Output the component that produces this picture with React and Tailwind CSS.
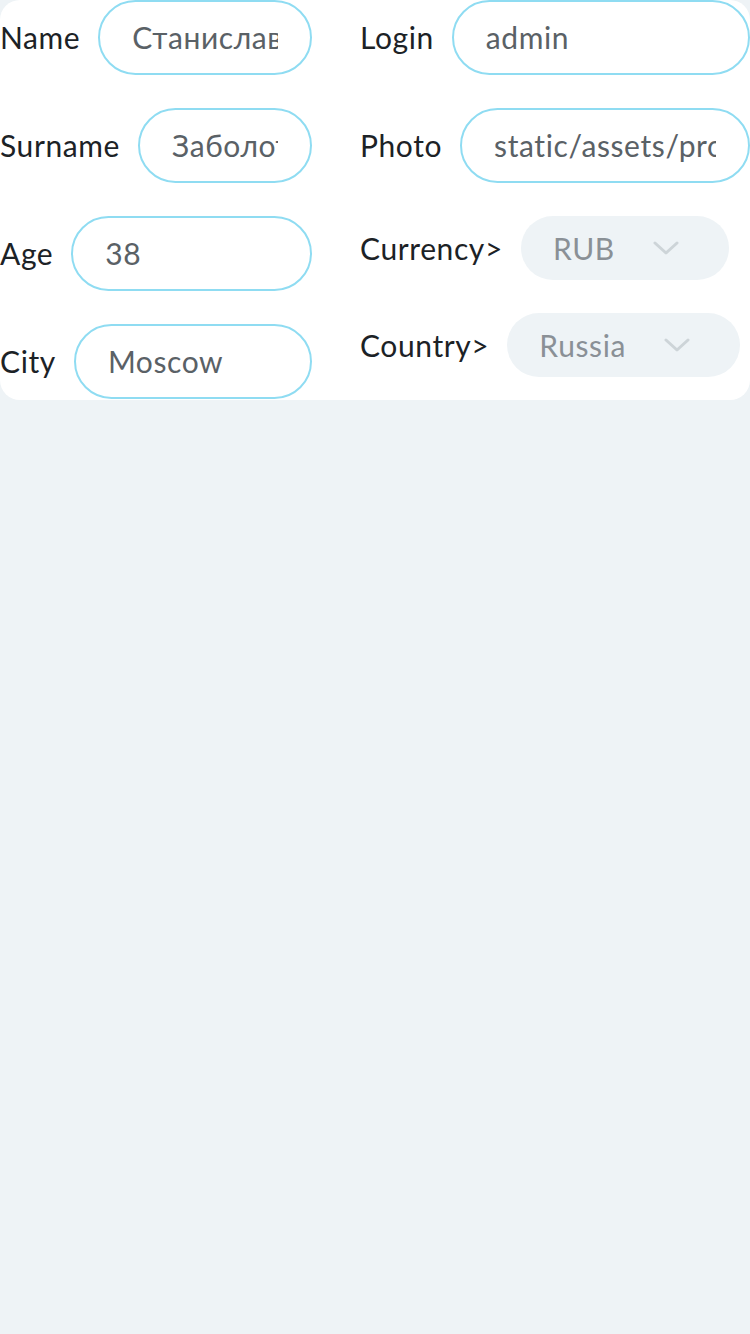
import React from 'react';

const font = { fontFamily: 'Lato, "Noto Sans", sans-serif' };

const Field = ({ label, value }) => (
  <div className="flex items-center gap-[18px] min-w-0">
    <span className="text-[30px] tracking-[0.6px] text-[#1c2226] whitespace-nowrap">{label}</span>
    <div className="flex-1 min-w-0 h-[75px] rounded-full border-2 border-[#8fdcf2] bg-white flex items-center px-[32px] overflow-hidden">
      <span className="text-[30px] tracking-[0.6px] text-[#5a6166] whitespace-nowrap overflow-hidden">{value}</span>
    </div>
  </div>
);

const Select = ({ label, value }) => (
  <div className="flex items-center gap-[18px]">
    <span className="text-[30px] tracking-[0.6px] text-[#1c2226] whitespace-nowrap">{label}</span>
    <div className="h-[64px] rounded-full bg-[#eef3f6] flex items-center pl-[32px] pr-[50px] gap-[38px]">
      <span className="text-[30px] tracking-[0.6px] text-[#8a9096] whitespace-nowrap">{value}</span>
      <svg width="26" height="14" viewBox="0 0 26 14" fill="none">
        <path d="M2 2l11 10 11-10" stroke="#cdd4d8" strokeWidth="3" strokeLinecap="round" strokeLinejoin="round" />
      </svg>
    </div>
  </div>
);

export default function App() {
  return (
    <div className="min-h-[1334px] bg-[#eef3f6]" style={font}>
      <div className="bg-white rounded-[20px] flex gap-[48px] h-[400px]">
        <div className="w-[312px] shrink-0 flex flex-col gap-[33px]">
          <Field label="Name" value="Станислав" />
          <Field label="Surname" value="Заболотный" />
          <Field label="Age" value="38" />
          <Field label="City" value="Moscow" />
        </div>
        <div className="flex-1 min-w-0 flex flex-col gap-[33px]">
          <Field label="Login" value="admin" />
          <Field label="Photo" value="static/assets/profile.png" />
          <Select label="Currency>" value="RUB" />
          <Select label="Country>" value="Russia" />
        </div>
      </div>
    </div>
  );
}
